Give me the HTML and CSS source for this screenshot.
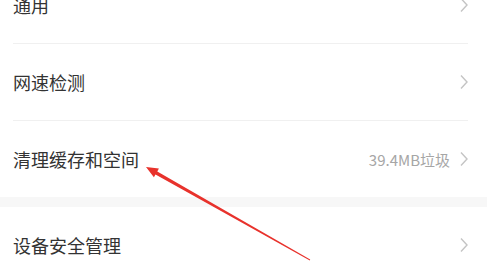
FILE: index.html
```html
<!DOCTYPE html>
<html lang="zh-CN">
<head>
    <meta charset="UTF-8">
    <meta name="viewport" content="width=device-width, initial-scale=1.0">
    <title>设置</title>
    <link rel="stylesheet" href="styles.css">
</head>
<body>
    <div class="page">
        <div class="group">
            <div class="row">
                <span class="label">通用</span>
                <svg class="chevron" width="8" height="16" viewBox="0 0 8 16"><polyline points="1,1.5 7,8 1,14.5"/></svg>
            </div>
            <div class="row">
                <span class="label">网速检测</span>
                <svg class="chevron" width="8" height="16" viewBox="0 0 8 16"><polyline points="1,1.5 7,8 1,14.5"/></svg>
            </div>
            <div class="row">
                <span class="label">清理缓存和空间</span>
                <span class="value">39.4MB垃圾</span>
                <svg class="chevron" width="8" height="16" viewBox="0 0 8 16"><polyline points="1,1.5 7,8 1,14.5"/></svg>
            </div>
        </div>
        <div class="group">
            <div class="row">
                <span class="label">设备安全管理</span>
                <svg class="chevron" width="8" height="16" viewBox="0 0 8 16"><polyline points="1,1.5 7,8 1,14.5"/></svg>
            </div>
        </div>
        <svg class="arrow" width="487" height="275" viewBox="0 0 487 275">
            <polygon fill="#e8322c" points="146,167 158.9,168.5 157.3,171.4 310.2,259.6 309.8,260.4 155.5,174.4 153.9,177.3"/>
        </svg>
    </div>
</body>
</html>
```

FILE: styles.css
```css
body {
    margin: 0;
    background: #f7f7f7;
    font-family: "Noto Sans CJK SC", "Noto Sans", sans-serif;
    color: #333;
    overflow: hidden;
}
.page {
    position: relative;
    width: 487px;
    height: 275px;
    overflow: hidden;
}
.group {
    background: #fff;
    padding: 0 19px 0 13px;
}
.group:first-child {
    margin-top: -33px;
    margin-bottom: 10px;
}
.row {
    display: flex;
    align-items: center;
    height: 76px;
    border-top: 1px solid #f0f0f0;
}
.group .row:first-child {
    border-top: none;
}
.label {
    flex: 1;
    font-size: 18px;
    color: #333;
}
.value {
    font-size: 15px;
    color: #a6a6a6;
    margin-right: 10px;
}
.chevron {
    fill: none;
    stroke: #c4c4c4;
    stroke-width: 1.4;
}
.arrow {
    position: absolute;
    left: 0;
    top: 0;
}
```
